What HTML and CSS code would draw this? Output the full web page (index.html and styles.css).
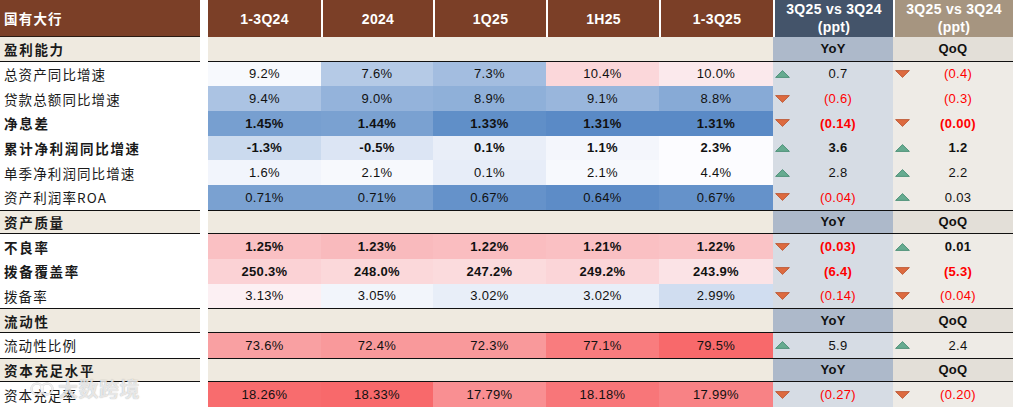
FILE: index.html
```html
<!DOCTYPE html>
<html lang="zh">
<head>
<meta charset="utf-8">
<link rel="stylesheet" href="styles.css">
</head>
<body>
<div class="sheet">
  <div class="row head">
    <div class="lab hl">国有大行</div><div class="gap"></div>
    <div class="hc first">1-3Q24</div>
    <div class="hc">2024</div>
    <div class="hc">1Q25</div>
    <div class="hc">1H25</div>
    <div class="hc">1-3Q25</div>
    <div class="hc yh">3Q25 vs 3Q24<br>(ppt)</div>
    <div class="hc qh">3Q25 vs 3Q24<br>(ppt)</div>
  </div>

  <div class="row sec top">
    <div class="lab">盈利能力</div><div class="gap"></div>
    <div class="sd"></div><div class="sy">YoY</div><div class="sq">QoQ</div>
  </div>

  <div class="row">
    <div class="lab">总资产同比增速</div><div class="gap"></div>
    <div class="c" style="background:#F7F9FD">9.2%</div>
    <div class="c" style="background:#B5CAE6">7.6%</div>
    <div class="c" style="background:#A3BDE0">7.3%</div>
    <div class="c" style="background:#FBD7DA">10.4%</div>
    <div class="c" style="background:#FBE9EC">10.0%</div>
    <div class="ch y"><svg class="ar" viewBox="0 0 15 8"><polygon class="up" points="7.5,0.6 14.4,7.4 0.6,7.4"/></svg><span>0.7</span></div>
    <div class="ch q"><svg class="ar" viewBox="0 0 15 8"><polygon class="dn" points="0.6,0.6 14.4,0.6 7.5,7.4"/></svg><span class="neg">(0.4)</span></div>
  </div>

  <div class="row">
    <div class="lab">贷款总额同比增速</div><div class="gap"></div>
    <div class="c" style="background:#ABC3E3">9.4%</div>
    <div class="c" style="background:#94B3DB">9.0%</div>
    <div class="c" style="background:#8FB0D9">8.9%</div>
    <div class="c" style="background:#99B6DC">9.1%</div>
    <div class="c" style="background:#87AAD6">8.8%</div>
    <div class="ch y"><svg class="ar" viewBox="0 0 15 8"><polygon class="dn" points="0.6,0.6 14.4,0.6 7.5,7.4"/></svg><span class="neg">(0.6)</span></div>
    <div class="ch q"><span class="neg">(0.3)</span></div>
  </div>

  <div class="row b">
    <div class="lab">净息差</div><div class="gap"></div>
    <div class="c" style="background:#779FD0">1.45%</div>
    <div class="c" style="background:#7AA1D1">1.44%</div>
    <div class="c" style="background:#608FC8">1.33%</div>
    <div class="c" style="background:#5A8AC6">1.31%</div>
    <div class="c" style="background:#5A8AC6">1.31%</div>
    <div class="ch y"><svg class="ar" viewBox="0 0 15 8"><polygon class="dn" points="0.6,0.6 14.4,0.6 7.5,7.4"/></svg><span class="neg">(0.14)</span></div>
    <div class="ch q"><svg class="ar" viewBox="0 0 15 8"><polygon class="dn" points="0.6,0.6 14.4,0.6 7.5,7.4"/></svg><span class="neg">(0.00)</span></div>
  </div>

  <div class="row b">
    <div class="lab">累计净利润同比增速</div><div class="gap"></div>
    <div class="c" style="background:#CBDAEE">-1.3%</div>
    <div class="c" style="background:#DCE5F4">-0.5%</div>
    <div class="c" style="background:#E9EEF8">0.1%</div>
    <div class="c" style="background:#F4F6FC">1.1%</div>
    <div class="c" style="background:#FCFCFF">2.3%</div>
    <div class="ch y"><svg class="ar" viewBox="0 0 15 8"><polygon class="up" points="7.5,0.6 14.4,7.4 0.6,7.4"/></svg><span>3.6</span></div>
    <div class="ch q"><svg class="ar" viewBox="0 0 15 8"><polygon class="up" points="7.5,0.6 14.4,7.4 0.6,7.4"/></svg><span>1.2</span></div>
  </div>

  <div class="row">
    <div class="lab">单季净利润同比增速</div><div class="gap"></div>
    <div class="c" style="background:#F2F5FC">1.6%</div>
    <div class="c" style="background:#F7F9FD">2.1%</div>
    <div class="c" style="background:#E7EDF8">0.1%</div>
    <div class="c" style="background:#F7F9FD">2.1%</div>
    <div class="c" style="background:#FCFCFF">4.4%</div>
    <div class="ch y"><svg class="ar" viewBox="0 0 15 8"><polygon class="up" points="7.5,0.6 14.4,7.4 0.6,7.4"/></svg><span>2.8</span></div>
    <div class="ch q"><svg class="ar" viewBox="0 0 15 8"><polygon class="up" points="7.5,0.6 14.4,7.4 0.6,7.4"/></svg><span>2.2</span></div>
  </div>

  <div class="row">
    <div class="lab">资产利润率ROA</div><div class="gap"></div>
    <div class="c" style="background:#7AA1D1">0.71%</div>
    <div class="c" style="background:#7AA1D1">0.71%</div>
    <div class="c" style="background:#6592CA">0.67%</div>
    <div class="c" style="background:#5D8CC7">0.64%</div>
    <div class="c" style="background:#6592CA">0.67%</div>
    <div class="ch y"><svg class="ar" viewBox="0 0 15 8"><polygon class="dn" points="0.6,0.6 14.4,0.6 7.5,7.4"/></svg><span class="neg">(0.04)</span></div>
    <div class="ch q"><svg class="ar" viewBox="0 0 15 8"><polygon class="up" points="7.5,0.6 14.4,7.4 0.6,7.4"/></svg><span>0.03</span></div>
  </div>

  <div class="row sec">
    <div class="lab">资产质量</div><div class="gap"></div>
    <div class="sd"></div><div class="sy">YoY</div><div class="sq">QoQ</div>
  </div>

  <div class="row b">
    <div class="lab">不良率</div><div class="gap"></div>
    <div class="c" style="background:#FAC0C3">1.25%</div>
    <div class="c" style="background:#F9BABD">1.23%</div>
    <div class="c" style="background:#FABDC0">1.22%</div>
    <div class="c" style="background:#FAC0C3">1.21%</div>
    <div class="c" style="background:#FAC3C6">1.22%</div>
    <div class="ch y"><svg class="ar" viewBox="0 0 15 8"><polygon class="dn" points="0.6,0.6 14.4,0.6 7.5,7.4"/></svg><span class="neg">(0.03)</span></div>
    <div class="ch q"><svg class="ar" viewBox="0 0 15 8"><polygon class="up" points="7.5,0.6 14.4,7.4 0.6,7.4"/></svg><span>0.01</span></div>
  </div>

  <div class="row b">
    <div class="lab">拨备覆盖率</div><div class="gap"></div>
    <div class="c" style="background:#FBD2D5">250.3%</div>
    <div class="c" style="background:#FBD8DA">248.0%</div>
    <div class="c" style="background:#FBDBDD">247.2%</div>
    <div class="c" style="background:#FBD5D8">249.2%</div>
    <div class="c" style="background:#FBE3E6">243.9%</div>
    <div class="ch y"><svg class="ar" viewBox="0 0 15 8"><polygon class="dn" points="0.6,0.6 14.4,0.6 7.5,7.4"/></svg><span class="neg">(6.4)</span></div>
    <div class="ch q"><svg class="ar" viewBox="0 0 15 8"><polygon class="dn" points="0.6,0.6 14.4,0.6 7.5,7.4"/></svg><span class="neg">(5.3)</span></div>
  </div>

  <div class="row">
    <div class="lab">拨备率</div><div class="gap"></div>
    <div class="c" style="background:#FCF0F3">3.13%</div>
    <div class="c" style="background:#F2F5FB">3.05%</div>
    <div class="c" style="background:#E8EEF8">3.02%</div>
    <div class="c" style="background:#E8EEF8">3.02%</div>
    <div class="c" style="background:#D0DDF0">2.99%</div>
    <div class="ch y"><svg class="ar" viewBox="0 0 15 8"><polygon class="dn" points="0.6,0.6 14.4,0.6 7.5,7.4"/></svg><span class="neg">(0.14)</span></div>
    <div class="ch q"><svg class="ar" viewBox="0 0 15 8"><polygon class="dn" points="0.6,0.6 14.4,0.6 7.5,7.4"/></svg><span class="neg">(0.04)</span></div>
  </div>

  <div class="row sec">
    <div class="lab">流动性</div><div class="gap"></div>
    <div class="sd"></div><div class="sy">YoY</div><div class="sq">QoQ</div>
  </div>

  <div class="row">
    <div class="lab">流动性比例</div><div class="gap"></div>
    <div class="c" style="background:#F9A0A2">73.6%</div>
    <div class="c" style="background:#F9999B">72.4%</div>
    <div class="c" style="background:#F9999B">72.3%</div>
    <div class="c" style="background:#F97C7E">77.1%</div>
    <div class="c" style="background:#F8696B">79.5%</div>
    <div class="ch y"><svg class="ar" viewBox="0 0 15 8"><polygon class="up" points="7.5,0.6 14.4,7.4 0.6,7.4"/></svg><span>5.9</span></div>
    <div class="ch q"><svg class="ar" viewBox="0 0 15 8"><polygon class="up" points="7.5,0.6 14.4,7.4 0.6,7.4"/></svg><span>2.4</span></div>
  </div>

  <div class="row sec">
    <div class="lab">资本充足水平</div><div class="gap"></div>
    <div class="sd"></div><div class="sy">YoY</div><div class="sq">QoQ</div>
  </div>

  <div class="row">
    <div class="lab">资本充足率</div><div class="gap"></div>
    <div class="c" style="background:#F86C6E">18.26%</div>
    <div class="c" style="background:#F8696B">18.33%</div>
    <div class="c" style="background:#F98F92">17.79%</div>
    <div class="c" style="background:#F87679">18.18%</div>
    <div class="c" style="background:#F88285">17.99%</div>
    <div class="ch y"><svg class="ar" viewBox="0 0 15 8"><polygon class="dn" points="0.6,0.6 14.4,0.6 7.5,7.4"/></svg><span class="neg">(0.27)</span></div>
    <div class="ch q"><svg class="ar" viewBox="0 0 15 8"><polygon class="dn" points="0.6,0.6 14.4,0.6 7.5,7.4"/></svg><span class="neg">(0.20)</span></div>
  </div>

  <div class="wm">
    <svg class="wm-logo" viewBox="0 0 26 16"><circle cx="7" cy="8" r="5.5"/><circle cx="17" cy="8" r="5.5"/></svg>
    <span>大数跨境</span>
  </div>
</div>
</body>
</html>
```

FILE: styles.css
```css
* { box-sizing: border-box; }

html, body {
  margin: 0;
  padding: 0;
  background: #ffffff;
}

.sheet {
  position: relative;
  width: 1013px;
  font-family: "Liberation Sans", Arial, sans-serif;
  font-size: 13px;
  color: #111;
}

.row {
  display: grid;
  grid-template-columns: 200px 8px 113px 112px 113px 113px 114px 120px 120px;
  height: 24.67px;
  align-items: stretch;
}

.row > div {
  display: flex;
  align-items: center;
  justify-content: center;
  min-width: 0;
  white-space: nowrap;
}

.gap { background: #fff; }

.lab {
  justify-content: flex-start !important;
  padding-left: 4px;
  font-family: "Noto Sans CJK SC", "Liberation Sans", sans-serif;
  font-size: 13.5px;
  letter-spacing: 1.1px;
  color: #1a1a1a;
  background: #fff;
}

.b .lab,
.sec .lab {
  font-weight: 700;
  letter-spacing: 1.7px;
}
.head .lab { letter-spacing: 1.2px; }

.b .c,
.b .ch span { font-weight: 700; }

.c { letter-spacing: 0.3px; }

/* header */
.head { height: 37px; }
.head .hl {
  background: #7B3F27;
  color: #fff;
  font-weight: 700;
  border-bottom: 1px solid #2a1a12;
}
.hc {
  background: #7B3F27;
  color: #fff;
  font-weight: 700;
  font-size: 14px;
  letter-spacing: 0.3px;
  border-left: 2px solid #fff;
  text-align: center;
  line-height: 18px;
}
.hc.first { border-left: 0; }
.hc.yh { background: #44546A; align-items: flex-start !important; padding-top: 0; }
.hc.qh { background: #A69580; align-items: flex-start !important; padding-top: 0; }

/* section rows */
.sec > div:not(.gap) {
  background: #EFEAE0;
  border-top: 1px solid #111;
  border-bottom: 1px solid #111;
}
.sec.top > div:not(.gap) { border-top: 0; }
.sec .sd { grid-column: span 5; }
.sec .sy {
  background: #ADB9CA !important;
  font-weight: 700;
  letter-spacing: 0.3px;
}
.sec .sq {
  background: #E3DFD8 !important;
  font-weight: 700;
  letter-spacing: 0.3px;
}

/* change cells */
.row > .ch {
  display: grid;
  grid-template-columns: 100%;
  grid-template-areas: "a";
  justify-content: stretch;
  align-items: center;
  letter-spacing: 0.3px;
}
.ch.y { background: #D6DCE4; }
.ch.q { background: #EEEBE6; }
.ch > * { grid-area: a; }
.ch span {
  justify-self: center;
  padding-left: 10px;
}
.ch .ar {
  justify-self: start;
  width: 15px;
  height: 8px;
  margin-left: 2px;
}
.neg { color: #FF0000; }

.up { fill: #66AB90; stroke: #3E876C; stroke-width: 0.8; }
.dn { fill: #DD6A3F; stroke: #B84E2A; stroke-width: 0.8; }

/* watermark */
.wm {
  position: absolute;
  left: 30px;
  top: 374px;
  display: flex;
  align-items: center;
  gap: 2px;
  pointer-events: none;
}
.wm span {
  font-family: "Noto Sans CJK SC", sans-serif;
  font-weight: 700;
  font-size: 20px;
  letter-spacing: 0.5px;
  color: rgba(255, 255, 255, 0.72);
  text-shadow: 0 0 1px rgba(90, 90, 90, 0.55);
}
.wm-logo {
  width: 26px;
  height: 16px;
  fill: none;
  stroke: rgba(255, 255, 255, 0.8);
  stroke-width: 2;
  filter: drop-shadow(0 0 0.6px rgba(80, 80, 80, 0.6));
}
```
